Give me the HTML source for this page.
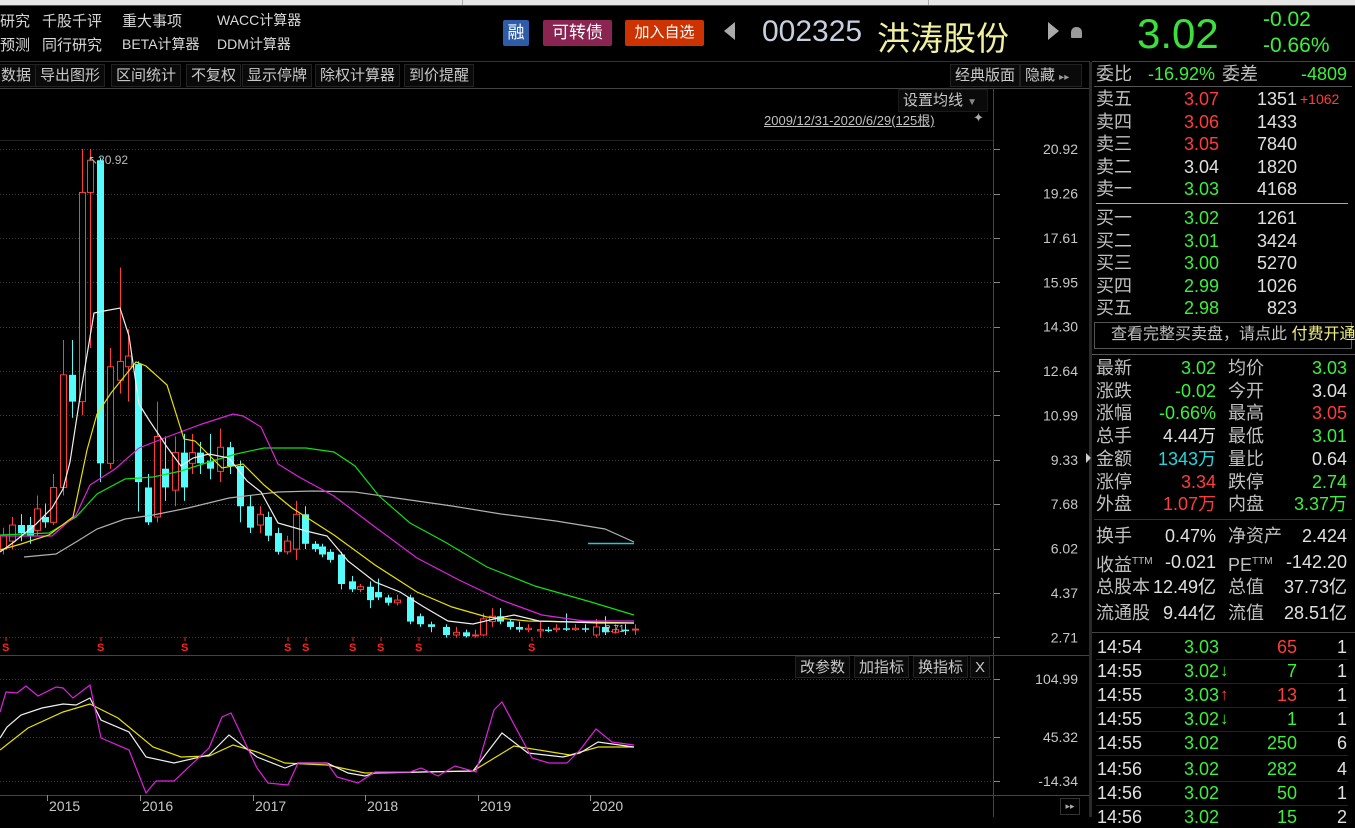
<!DOCTYPE html>
<html><head><meta charset="utf-8">
<style>
*{margin:0;padding:0;box-sizing:border-box}
body{width:1355px;height:817px;background:#000;overflow:hidden;position:relative;font-family:"Liberation Sans","Noto Sans CJK SC",sans-serif;color:#c8c8c8}
.a{position:absolute;white-space:nowrap}
.m{font-size:15px;color:#d8d8d8}
.tb{position:absolute;top:64px;height:23px;border:1px solid #222;background:#0a0a0a;font-size:15px;color:#c8c8c8;line-height:21px;padding:0 4px}
.btn{position:absolute;top:20px;height:26px;font-size:17px;color:#fff;line-height:26px;text-align:center;border-radius:2px}
.r{position:absolute;text-align:right;white-space:nowrap;line-height:22px;height:22px}
.l{position:absolute;white-space:nowrap;color:#c0c0c0;line-height:22px;height:22px}
.g{color:#3cf03c}.rd{color:#ff3c3c}.w{color:#e0e0e0}.c{color:#22d8e0}.y{color:#f0f080}
.hl{position:absolute;height:1px;background:#555}
</style></head><body>
<div class="a" style="left:0;top:0;width:1355px;height:5px;background:#e6e6e6"></div>
<div class="a" style="left:462px;top:0;width:1px;height:5px;background:#aaa"></div>
<div class="a" style="left:928px;top:0;width:1px;height:5px;background:#aaa"></div>
<div class="a" style="left:0;top:5px;width:1355px;height:1px;background:#555"></div>

<div class="a m" style="left:0;top:10px">研究</div>
<div class="a m" style="left:0;top:34px">预测</div>
<div class="a m" style="left:42px;top:10px">千股千评</div>
<div class="a m" style="left:42px;top:34px">同行研究</div>
<div class="a m" style="left:122px;top:10px">重大事项</div>
<div class="a m" style="left:122px;top:34px;font-size:14px">BETA计算器</div>
<div class="a m" style="left:217px;top:10px;font-size:14px">WACC计算器</div>
<div class="a m" style="left:217px;top:34px;font-size:14px">DDM计算器</div>

<div class="btn" style="left:503px;width:26px;background:#2d5ca8">融</div>
<div class="btn" style="left:543px;width:69px;background:#8a2552">可转债</div>
<div class="btn" style="left:625px;width:79px;background:#cc3300;font-size:15px">加入自选</div>
<div class="a" style="left:724px;top:22px;width:0;height:0;border-top:9px solid transparent;border-bottom:9px solid transparent;border-right:11px solid #aaa"></div>
<div class="a" style="left:762px;top:15px;font-size:30px;color:#c8d0e0">002325</div>
<div class="a" style="left:877px;top:12px;font-size:33px;color:#f0f0a0">洪涛股份</div>
<div class="a" style="left:1048px;top:22px;width:0;height:0;border-top:9px solid transparent;border-bottom:9px solid transparent;border-left:11px solid #aaa"></div>
<div class="a" style="left:1071px;top:27px;width:11px;height:11px;background:#999;border-radius:5px 5px 1px 1px"></div>

<div class="a" style="left:0;top:61px;width:1090px;height:1px;background:#333"></div>
<div class="tb" style="left:-4px">数据</div>
<div class="tb" style="left:35px">导出图形</div>
<div class="tb" style="left:111px">区间统计</div>
<div class="tb" style="left:186px">不复权</div>
<div class="tb" style="left:242px">显示停牌</div>
<div class="tb" style="left:315px">除权计算器</div>
<div class="tb" style="left:404px">到价提醒</div>
<div class="tb" style="left:950px">经典版面</div>
<div class="tb" style="left:1020px;width:62px">隐藏 <span style="font-size:10px;color:#999">▸▸</span></div>
<div class="a" style="left:0;top:88px;width:1090px;height:1px;background:#444"></div>

<div class="tb" style="left:898px;top:89px;width:90px;border-color:#1a1a1a">设置均线 <span style="font-size:10px;color:#888">▼</span></div>
<div class="a" style="left:764px;top:110px;font-size:13px;color:#c0c0c0;text-decoration:underline">2009/12/31-2020/6/29(125根)</div>
<div class="a" style="left:973px;top:110px;font-size:13px;color:#aaa">✦</div>

<svg class="a" style="left:0;top:0" width="1092" height="817" id="sv"></svg>

<div class="tb" style="left:795px;top:656px;height:22px">改参数</div>
<div class="tb" style="left:854px;top:656px;height:22px">加指标</div>
<div class="tb" style="left:913px;top:656px;height:22px">换指标</div>
<div class="tb" style="left:970px;top:656px;height:22px">X</div>
<div class="a" style="left:1060px;top:798px;width:20px;height:17px;border:1px solid #333;font-size:9px;color:#aaa;text-align:center;line-height:15px">▸▸</div>

<div class="a" style="left:1089px;top:62px;width:3px;height:755px;background:#2a2a2a"></div>
<div class="a" style="left:1086px;top:453px;width:0;height:0;border-top:5px solid transparent;border-bottom:5px solid transparent;border-left:5px solid #ccc"></div>
<div class="a g" style="left:1137px;top:10px;font-size:42px;color:#3ce03c">3.02</div>
<div class="a g" style="left:1263px;top:8px;font-size:21px">-0.02</div>
<div class="a g" style="left:1263px;top:34px;font-size:21px">-0.66%</div>
<div class="a" style="left:1092px;top:61px;width:263px;height:1px;background:#444"></div>

<div id="rp"></div>
<div class="a" style="left:1094px;top:322px;width:258px;height:27px;border:1px solid #555"></div>
<div class="a" style="left:1111px;top:324px;font-size:16px;line-height:22px;color:#c0c0c0">查看完整买卖盘，请点此 <span class="y">付费开通</span></div>

<script>
const sv=document.getElementById('sv');let h='';
const Y=p=>149+(20.92-p)*26.82;
[20.92,19.26,17.61,15.95,14.30,12.64,10.99,9.33,7.68,6.02,4.37,2.71].forEach(p=>{const y=Math.round(Y(p))+.5;h+=`<line x1="0" y1="${y}" x2="993" y2="${y}" stroke="#3a3a3a" stroke-dasharray="1,2"/><line x1="993" y1="${y}" x2="1000" y2="${y}" stroke="#888"/>`;});
[[679,'104.99'],[737,'45.32'],[781,'-14.34']].forEach(a=>{h+=`<line x1="0" y1="${a[0]+.5}" x2="993" y2="${a[0]+.5}" stroke="#3a3a3a" stroke-dasharray="1,2"/><line x1="993" y1="${a[0]+.5}" x2="1000" y2="${a[0]+.5}" stroke="#888"/>`;});
h+=`<line x1="993.5" y1="89" x2="993.5" y2="817" stroke="#444"/><line x1="0" y1="655.5" x2="1090" y2="655.5" stroke="#444"/><line x1="0" y1="795.5" x2="1090" y2="795.5" stroke="#444"/><line x1="0" y1="140.5" x2="993" y2="140.5" stroke="#222"/>`;
[47,140,253,365,478,590].forEach(x=>h+=`<line x1="${x}.5" y1="795" x2="${x}.5" y2="801" stroke="#888"/>`);
const C=[[3,6.0,6.5,6.8,5.8],[12,6.3,6.9,7.2,6.0],[21,6.9,6.6,7.3,6.3],[30,6.9,6.5,7.2,6.2],[37,6.7,7.5,8.0,6.5],[45,7.2,7.0,7.7,6.8],[53,7.0,8.3,8.8,6.9],[63,8.3,12.5,13.8,8.0],[72,12.5,11.5,13.8,10.9],[82,11.5,19.3,20.92,11.0],[90,19.3,20.5,20.92,13.5],[100,20.5,9.2,20.6,8.5],[110,9.2,12.8,13.5,9.0],[120,12.3,13.0,16.5,11.8],[128,12.8,13.2,14.2,11.5],[138,12.9,8.5,13.0,7.4],[148,8.3,7.0,8.8,6.9],[157,7.2,10.2,11.5,7.0],[165,9.0,8.3,10.2,7.8],[175,8.2,9.6,10.2,7.6],[184,9.6,8.3,10.3,7.8],[192,9.2,9.6,10.3,8.8],[200,9.6,9.2,10.0,8.8],[210,9.3,9.0,10.3,8.6],[220,8.9,9.8,10.5,8.5],[230,9.8,9.1,10.0,8.8],[240,9.1,7.6,9.3,7.0],[250,7.6,6.8,8.0,6.6],[260,6.9,7.3,7.6,6.6],[268,7.2,6.5,7.4,6.3],[278,6.6,5.9,6.8,5.8],[287,5.9,6.3,6.5,5.8],[296,6.0,7.3,7.8,5.6],[305,7.3,6.2,7.6,6.0],[315,6.2,6.0,6.3,5.9],[322,6.1,5.8,6.2,5.7],[330,5.9,5.6,6.0,5.5],[341,5.8,4.7,5.9,4.5],[352,4.8,4.5,5.0,4.4],[360,4.5,4.6,4.7,4.4],[370,4.6,4.1,4.8,3.8],[378,4.4,4.2,4.9,4.1],[388,4.2,4.0,4.3,3.9],[397,4.0,4.1,4.3,3.9],[410,4.2,3.3,4.3,3.2],[420,3.5,3.2,3.6,3.1],[431,3.2,3.1,3.3,2.9],[446,3.1,2.8,3.2,2.7],[456,2.8,2.9,3.1,2.7],[466,2.9,2.75,3.0,2.7],[475,2.8,2.8,3.0,2.7],[483,2.8,3.4,3.6,2.75],[492,3.3,3.5,3.8,3.1],[500,3.5,3.3,3.8,3.2],[510,3.3,3.1,3.4,3.0],[519,3.1,3.0,3.3,2.9],[528,3.0,3.05,3.2,2.9],[540,2.95,3.0,3.3,2.7],[548,3.0,2.95,3.1,2.9],[556,3.0,3.05,3.2,2.9],[566,3.05,3.0,3.6,2.95],[575,3.0,3.05,3.2,2.95],[585,3.05,3.0,3.2,2.9],[596,2.8,3.1,3.4,2.7],[605,3.1,2.9,3.5,2.8],[615,2.9,3.0,3.2,2.85],[625,3.0,2.95,3.2,2.8],[635,3.0,3.02,3.2,2.8]];
C.forEach(([x,o,c,hi,lo])=>{const up=c>=o,col=up?'#ff3c3c':'#54fcfc';const t=Y(Math.max(o,c)),b=Y(Math.min(o,c));
h+=`<line x1="${x+.5}" y1="${Y(hi)}" x2="${x+.5}" y2="${Y(lo)}" stroke="${col}"/>`;
h+=up?`<rect x="${x-2.5}" y="${t}" width="6" height="${Math.max(b-t,1)}" fill="#000" stroke="${col}"/>`:`<rect x="${x-3}" y="${t}" width="7" height="${Math.max(b-t,1.5)}" fill="${col}"/>`;});
const pl=(p,c)=>h+=`<polyline fill="none" stroke="${c}" stroke-width="1.2" points="${p}"/>`;
pl("24,557 56,554 76,542 97,529 125,519 153,515 188,508 229,498 278,492 313,491 355,492 396,498 452,506 501,514 556,521 605,529 634,542","#b0b0b0");
pl("0,535 49,533 76,517 97,494 125,479 153,477 181,471 209,462 236,454 264,448 306,448 334,452 355,466 379,496 410,523 445,542 487,567 535,586 591,602 634,615","#10e010");
pl("0,536 52,536 76,515 90,485 115,469 139,448 167,437 202,424 233,414 243,416 261,427 278,464 299,477 334,496 375,527 417,558 459,580 501,600 542,615 584,621 634,621","#e020e0");
pl("0,550 21,544 49,535 73,517 87,450 97,414 111,393 136,362 146,366 167,385 184,439 195,441 222,468 243,464 264,485 292,508 334,535 375,565 417,592 452,607 487,617 528,621 634,623","#e8e000");
pl("0,552 14,542 35,525 52,508 63,489 70,462 80,397 94,313 104,311 120,308 129,336 139,404 149,420 167,447 181,466 193,458 209,454 229,458 247,481 261,492 278,523 306,531 327,536 348,561 375,582 400,592 424,607 448,621 473,624 494,619 514,615 539,621 570,622 598,623 634,623","#f0f0f0");
h+=`<line x1="588" y1="543.5" x2="634" y2="543.5" stroke="#22c8e0" stroke-width="1.5"/>`;
h+=`<text x="88" y="164" fill="#bbb" font-size="12" font-family="Liberation Sans">↖20.92</text><text x="605" y="632" fill="#bbb" font-size="10" font-family="Liberation Sans">2.71</text>`;
[6,101,185,288,306,353,381,419,532].forEach(x=>h+=`<text x="${x-4}" y="651" fill="#ff2020" font-size="11" font-weight="bold" font-family="Liberation Sans">S</text><line x1="${x}" y1="637" x2="${x}" y2="641" stroke="#ff2020"/>`);
pl("0,750 28,728 63,712 90,704 118,718 153,747 181,757 209,756 233,745 257,752 285,763 327,765 365,773 473,771 514,746 570,755 598,747 634,747","#e8e000");
pl("0,738 7,727 21,715 42,708 63,704 76,705 90,698 101,720 129,732 146,757 174,763 209,755 229,735 257,757 285,768 298,763 327,763 348,773 365,776 375,773 473,771 502,733 528,753 563,757 580,753 598,742 634,747","#f0f0f0");
pl("0,712 6,692 17,693 26,686 38,696 56,687 63,688 73,698 90,685 101,738 129,750 146,793 156,781 174,781 209,748 222,717 231,713 257,768 268,783 288,785 298,763 327,763 337,777 358,783 375,772 410,772 421,768 438,776 455,766 476,772 494,710 502,702 532,758 549,763 567,763 580,750 596,729 612,742 634,745","#e020e0");
[[47,'2015'],[140,'2016'],[253,'2017'],[365,'2018'],[478,'2019'],[590,'2020']].forEach(a=>h+=`<text x="${a[0]+2}" y="811" fill="#c8c8c8" font-size="14" font-family="Liberation Sans">${a[1]}</text>`);
[20.92,19.26,17.61,15.95,14.30,12.64,10.99,9.33,7.68,6.02,4.37,2.71].forEach(a=>h+=`<text x="1078" y="${Y(a)+5}" fill="#c8c8c8" font-size="14" text-anchor="end" font-family="Liberation Sans">${a.toFixed(2)}</text>`);
[[679,'104.99'],[737,'45.32'],[781,'-14.34']].forEach(a=>h+=`<text x="1078" y="${a[0]+5}" fill="#c8c8c8" font-size="14" text-anchor="end" font-family="Liberation Sans">${a[1]}</text>`);
sv.innerHTML=h;

let r='';const L=(x,y,t,c='')=>r+=`<div class="l ${c}" style="left:${x}px;top:${y-11}px;font-size:18px">${t}</div>`;
const R=(x,y,t,c)=>r+=`<div class="r ${c}" style="right:${1355-x}px;top:${y-11}px;font-size:18px">${t}</div>`;
L(1096,74,'委比');R(1215,74,'-16.92%','g');L(1222,74,'委差');R(1347,74,'-4809','g');
r+=`<div class="hl" style="left:1094px;top:86px;width:258px"></div>`;
const ob=[['卖五','3.07','rd','1351'],['卖四','3.06','rd','1433'],['卖三','3.05','rd','7840'],['卖二','3.04','w','1820'],['卖一','3.03','g','4168']];
ob.forEach((o,i)=>{const y=99+i*22.6;L(1096,y,o[0]);R(1219,y,o[1],o[2]);R(1297,y,o[3],'w');});
r+=`<div class="l rd" style="left:1300px;top:${99-11}px;font-size:14px;color:#ff3c3c">+1062</div>`;
r+=`<div class="hl" style="left:1096px;top:203px;width:252px;background:#aaa"></div>`;
const bb=[['买一','3.02','1261'],['买二','3.01','3424'],['买三','3.00','5270'],['买四','2.99','1026'],['买五','2.98','823']];
bb.forEach((o,i)=>{const y=218+i*22.6;L(1096,y,o[0]);R(1219,y,o[1],'g');R(1297,y,o[2],'w');});
r+=`<div class="hl" style="left:1092px;top:354px;width:263px"></div>`;
const st=[['最新','3.02','g','均价','3.03','g'],['涨跌','-0.02','g','今开','3.04','w'],['涨幅','-0.66%','g','最高','3.05','rd'],['总手','4.44万','w','最低','3.01','g'],['金额','1343万','c','量比','0.64','w'],['涨停','3.34','rd','跌停','2.74','g'],['外盘','1.07万','rd','内盘','3.37万','g']];
st.forEach((o,i)=>{const y=368+i*22.7;L(1096,y,o[0]);R(1216,y,o[1],o[2]);L(1228,y,o[3]);R(1347,y,o[4],o[5]);});
r+=`<div class="hl" style="left:1094px;top:519px;width:258px;background:#333"></div>`;
const s2=[['换手','0.47%','净资产','2.424'],['收益<sup style="font-size:10px">TTM</sup>','-0.021','PE<sup style="font-size:10px">TTM</sup>','-142.20'],['总股本','12.49亿','总值','37.73亿'],['流通股','9.44亿','流值','28.51亿']];
s2.forEach((o,i)=>{const y=536+i*25.5;L(1096,y,o[0]);R(1216,y,o[1],'w');L(1228,y,o[2]);R(1347,y,o[3],'w');});
r+=`<div class="hl" style="left:1092px;top:632px;width:263px;background:#444"></div>`;
const tk=[['14:54','3.03','','65','rd','1'],['14:55','3.02','↓','7','g','1'],['14:55','3.03','↑','13','rd','1'],['14:55','3.02','↓','1','g','1'],['14:55','3.02','','250','g','6'],['14:56','3.02','','282','g','4'],['14:56','3.02','','50','g','1'],['14:56','3.02','','15','g','2']];
tk.forEach((o,i)=>{const y=647+i*24.1+(i>=5?1:0);L(1097,y,o[0],'w');R(1219,y,o[1],'g');if(o[2])r+=`<div class="l ${o[2]=='↑'?'rd':'g'}" style="left:1220px;top:${y-11}px;font-size:17px;font-weight:bold">${o[2]}</div>`;R(1297,y,o[3],o[4]);R(1347,y,o[5],'w');
if(i<7)r+=`<div class="hl" style="left:1096px;top:${y+12}px;width:252px;background:#222"></div>`;});
document.getElementById('rp').innerHTML=r;
</script>
</body></html>
